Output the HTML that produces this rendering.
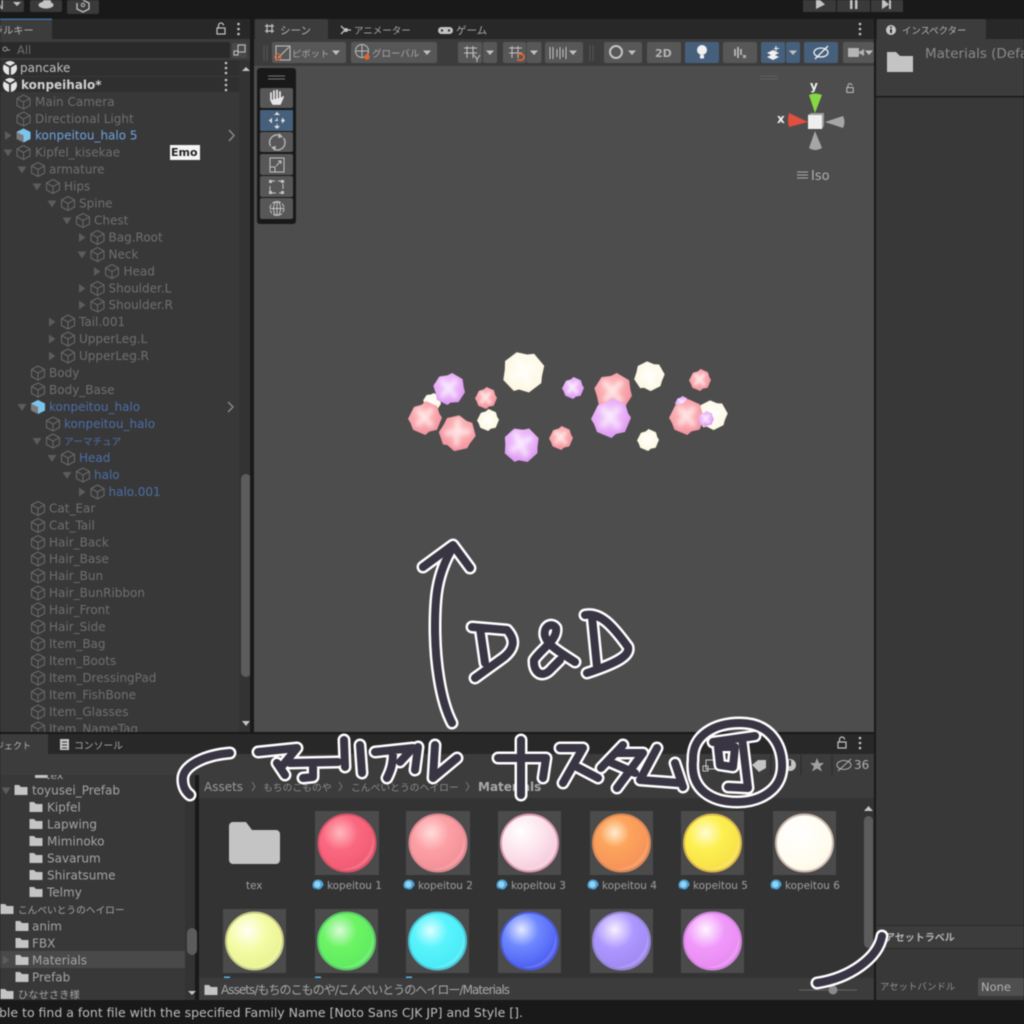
<!DOCTYPE html>
<html><head><meta charset="utf-8"><style>
html,body{margin:0;padding:0;background:#191919;width:1024px;height:1024px;overflow:hidden}
svg{display:block;filter:blur(.5px)}
text{font-family:"DejaVu Sans","Noto Sans CJK JP",sans-serif;font-size:12px;fill:#6f6f6f}
.b{fill:#4b6ea6}.u{fill:#bdbdbd}.k{fill:#a8a8a8;font-size:10.5px}.p{fill:#a5a5a5}.l{fill:#a0a0a0;font-size:10.4px}
.cu{color:#676767}.cb{color:#6a6a6a}
.hw{fill:none;stroke:#fff;stroke-width:13;stroke-linecap:round;stroke-linejoin:round}
.hd{fill:none;stroke:#3a3543;stroke-width:8;stroke-linecap:round;stroke-linejoin:round}
</style></head><body>
<svg width="1024" height="1024" viewBox="0 0 1024 1024" xmlns="http://www.w3.org/2000/svg">
<defs>
<path id="c" d="M0-7 6.500-3.500V3.500L0 7-6.500 3.500V-3.500ZM-6.500-3.500 0 0 6.500-3.500M0 0V7" fill="none" stroke="currentColor" stroke-width="1.100"/>
<path id="ar" d="M-3-4.500 3.500 0-3 4.500Z" fill="#5c5c5c"/>
<path id="ad" d="M-4.500-3H4.500L0 4Z" fill="#5c5c5c"/>
<path id="dd" d="M-4-2H4L0 2.500Z" fill="#c0c0c0"/>
<path id="f" d="M-6.500-5H-2L0-3H6.500V5H-6.500Z" fill="#c4c4c4"/>
<g id="un"><circle r="7" fill="#e4e4e4"/><path d="M0-1 0 7M0-1-6-4.500M0-1 6-4.500" stroke="#333" stroke-width="1.800"/></g>
<g id="pf"><path d="M0-7 7-3.500V3.500L0 7-7 3.500V-3.500Z" fill="#7a7a7a"/><path d="M0-7 7-3.500V3.500L0 7V0L-7-3.500Z" fill="#7cc4ec"/></g>
<g id="dots"><circle cy="-5" r="1.300" fill="#c4c4c4"/><circle r="1.300" fill="#c4c4c4"/><circle cy="5" r="1.300" fill="#c4c4c4"/></g>
<g id="lk"><rect x="-4" y="-1" width="8" height="6" fill="none" stroke="#c4c4c4" stroke-width="1.200"/><path d="M-2.500-1V-3.500A2.500 2.500 0 0 1 2.500-3.500" fill="none" stroke="#c4c4c4" stroke-width="1.200"/></g>
<filter id="sb" x="-50%" y="-50%" width="200%" height="200%"><feGaussianBlur stdDeviation=".13"/></filter>
<radialGradient id="gp" cx=".45" cy=".4" r=".65"><stop offset="0" stop-color="#ffc4c4"/><stop offset=".6" stop-color="#f8a4aa"/><stop offset="1" stop-color="#f08c9e"/></radialGradient>
<radialGradient id="gv" cx=".45" cy=".4" r=".65"><stop offset="0" stop-color="#f2ccff"/><stop offset=".6" stop-color="#e8aef6"/><stop offset="1" stop-color="#d68ff0"/></radialGradient>
<radialGradient id="gc" cx=".5" cy=".45" r=".65"><stop offset="0" stop-color="#fffef4"/><stop offset=".75" stop-color="#fdf8e4"/><stop offset="1" stop-color="#eadcb4"/></radialGradient>
<g id="g1"><polygon points="-.98,-.2 -.6,-.78 -.1,-.85 .2,-1 .85,-.62 .92,-.1 1,.2 .6,.82 .1,.85 -.1,1 -.75,.68 -.85,.2"/><path d="M-.45-.5 .4.45M.4-.5-.4.4" stroke="#fff" stroke-width=".3" stroke-linecap="round" fill="none" opacity=".6" filter="url(#sb)"/></g>
<g id="g2"><polygon points="-1,.05 -.65,-.65 -.2,-.78 .05,-1 .72,-.7 .85,-.25 1,-.02 .7,.7 .25,.8 .02,1 -.7,.7 -.85,.3"/><path d="M-.4-.45 .35.4M.35-.45-.4.35" stroke="#fff" stroke-width=".3" stroke-linecap="round" fill="none" opacity=".6" filter="url(#sb)"/></g>
<radialGradient id="s1" cx=".38" cy=".32" r=".75"><stop offset="0" stop-color="#ffb8bc"/><stop offset=".42" stop-color="#fa6880"/><stop offset="1" stop-color="#ee5870"/></radialGradient>
<radialGradient id="s2" cx=".38" cy=".32" r=".75"><stop offset="0" stop-color="#ffdcdc"/><stop offset=".42" stop-color="#fca0a4"/><stop offset="1" stop-color="#f08c94"/></radialGradient>
<radialGradient id="s3" cx=".35" cy=".3" r=".8"><stop offset="0" stop-color="#fff"/><stop offset=".45" stop-color="#fde6ee"/><stop offset="1" stop-color="#f4c4d8"/></radialGradient>
<radialGradient id="s4" cx=".38" cy=".32" r=".75"><stop offset="0" stop-color="#ffeccc"/><stop offset=".35" stop-color="#fca45c"/><stop offset="1" stop-color="#f68e58"/></radialGradient>
<radialGradient id="s5" cx=".38" cy=".32" r=".75"><stop offset="0" stop-color="#fffcd0"/><stop offset=".4" stop-color="#fdf050"/><stop offset="1" stop-color="#f6dc48"/></radialGradient>
<radialGradient id="s6" cx=".38" cy=".32" r=".8"><stop offset="0" stop-color="#fff"/><stop offset=".75" stop-color="#fffcee"/><stop offset="1" stop-color="#f4eede"/></radialGradient>
<radialGradient id="s7" cx=".38" cy=".32" r=".75"><stop offset="0" stop-color="#fffff4"/><stop offset=".45" stop-color="#f4fca4"/><stop offset="1" stop-color="#e8f090"/></radialGradient>
<radialGradient id="s8" cx=".38" cy=".32" r=".75"><stop offset="0" stop-color="#d8fad8"/><stop offset=".4" stop-color="#6cf464"/><stop offset="1" stop-color="#5ce860"/></radialGradient>
<radialGradient id="s9" cx=".38" cy=".32" r=".75"><stop offset="0" stop-color="#dcffff"/><stop offset=".4" stop-color="#58f4fc"/><stop offset="1" stop-color="#46e8f4"/></radialGradient>
<radialGradient id="s10" cx=".36" cy=".3" r=".75"><stop offset="0" stop-color="#e4eaff"/><stop offset=".4" stop-color="#6e88ff"/><stop offset="1" stop-color="#4858f0"/></radialGradient>
<radialGradient id="s11" cx=".38" cy=".3" r=".75"><stop offset="0" stop-color="#f8f0ff"/><stop offset=".45" stop-color="#ac98ff"/><stop offset="1" stop-color="#a086f0"/></radialGradient>
<radialGradient id="s12" cx=".38" cy=".3" r=".75"><stop offset="0" stop-color="#fff4ff"/><stop offset=".45" stop-color="#f098fa"/><stop offset="1" stop-color="#e888f0"/></radialGradient>
<path id="cr" d="M-8 26A27.500 27.500 0 0 0 26-8 A32 32 0 0 1-8 26Z" fill="#fff" opacity=".14"/>
<g id="mi"><circle r="5.500" fill="#4f9fd0"/><circle cx="-.6" cy="-.6" r="3.200" fill="#8fd4f4"/><path d="M-3.500 3.500A5 5 0 0 0 5 1" stroke="#24323e" stroke-width="1" fill="none"/></g>
</defs>

<rect width="1024" height="1024" fill="#191919"/>
<!-- top toolbar -->
<rect x="0" y="0" width="24" height="12" rx="2" fill="#3a3a3a"/><path d="M13 2H21L17 6Z" fill="#c4c4c4"/><text x="-5" y="9" style="fill:#c4c4c4">N</text>
<rect x="30" y="0" width="32" height="12" rx="2" fill="#3a3a3a"/><ellipse cx="46" cy="5" rx="7.500" ry="3.600" fill="#c4c4c4"/><circle cx="47" cy="2" r="4" fill="#c4c4c4"/>
<rect x="67" y="0" width="32" height="14" rx="2" fill="#3a3a3a"/><path d="M83 0 89 3V9L83 12 77 9V3" fill="none" stroke="#c4c4c4" stroke-width="1.300"/><circle cx="83" cy="5" r="1.700" fill="none" stroke="#c4c4c4"/>
<rect x="803" y="0" width="33" height="12" fill="#3a3a3a"/><rect x="837" y="0" width="33" height="12" fill="#3a3a3a"/><rect x="871" y="0" width="32" height="12" fill="#3a3a3a"/>
<path d="M816 0V9L825 4.500 820 0Z" fill="#c4c4c4"/><rect x="850" y="0" width="2.500" height="9" fill="#c4c4c4"/><rect x="855" y="0" width="2.500" height="9" fill="#c4c4c4"/><path d="M882 0V9L889 4.500 884 0Z" fill="#c4c4c4"/><rect x="889" y="0" width="2" height="9" fill="#c4c4c4"/>

<!-- hierarchy -->
<rect x="0" y="19" width="250" height="20" fill="#282828"/>
<rect x="0" y="19" width="52" height="20" fill="#3c3c3c"/><rect x="0" y="18.500" width="52" height="1.500" fill="#3d6d9c"/>
<text x="-7" y="34" style="font-size:10.200px;fill:#b4b4b4">ラルキー</text>
<use href="#lk" x="221" y="29"/><use href="#dots" x="238.500" y="29"/>
<rect x="0" y="39" width="250" height="21" fill="#3c3c3c"/>
<rect x="0" y="42" width="230" height="16" rx="2" fill="#2a2a2a"/>
<circle cx="5" cy="49" r="2" fill="none" stroke="#999" stroke-width="1"/><path d="M7 50 10 50" stroke="#999"/>
<text x="17" y="54" style="fill:#6e6e6e;font-size:11.500px">All</text>
<rect x="232" y="43" width="15" height="15" rx="2" fill="#4a4a4a"/><rect x="238" y="45" width="7" height="7" fill="none" stroke="#c4c4c4"/><rect x="234" y="51" width="4" height="4" fill="none" stroke="#c4c4c4"/>
<rect x="0" y="60" width="250" height="672" fill="#383838"/>
<rect x="0" y="60" width="239" height="16" fill="#2f2f2f"/><rect x="0" y="76" width="239" height="1" fill="#383838"/><rect x="0" y="77" width="239" height="15" fill="#2f2f2f"/>
<rect x="239" y="60" width="12" height="672" fill="#333"/>
<rect x="241" y="474" width="10" height="203" rx="5" fill="#5c5c5c"/>
<path d="M242 71H250L246 67Z" fill="#c4c4c4"/><path d="M242 721H250L246 726Z" fill="#c4c4c4"/>
<use href="#un" x="10" y="68"/><text x="20" y="72" style="fill:#c0c0c0">pancake</text><use href="#dots" x="226" y="68"/>
<use href="#un" x="10" y="85"/><text x="21" y="89" style="fill:#d0d0d0;font-weight:bold">konpeihalo*</text><use href="#dots" x="226" y="85"/>

<g class="cu">
<use href="#c" x="23.500" y="102"/><use href="#c" x="23.500" y="119"/><use href="#c" x="23.500" y="152.500"/>
<use href="#c" x="38" y="169.500"/><use href="#c" x="53" y="186.500"/><use href="#c" x="68" y="203.500"/><use href="#c" x="83" y="220.500"/>
<use href="#c" x="97.500" y="237.500"/><use href="#c" x="97.500" y="254.500"/><use href="#c" x="112" y="271.500"/><use href="#c" x="97.500" y="288.500"/><use href="#c" x="97.500" y="305"/>
<use href="#c" x="68" y="322"/><use href="#c" x="68" y="339"/><use href="#c" x="68" y="356"/>
<use href="#c" x="38" y="373"/><use href="#c" x="38" y="390"/>
<use href="#c" x="38" y="508.500"/><use href="#c" x="38" y="525.500"/><use href="#c" x="38" y="542.500"/><use href="#c" x="38" y="559"/><use href="#c" x="38" y="576"/><use href="#c" x="38" y="593"/><use href="#c" x="38" y="610"/><use href="#c" x="38" y="627"/><use href="#c" x="38" y="644"/><use href="#c" x="38" y="661"/><use href="#c" x="38" y="678"/><use href="#c" x="38" y="695"/><use href="#c" x="38" y="712"/><use href="#c" x="38" y="729"/>
<use href="#c" x="53" y="424"/><use href="#c" x="53" y="441"/><use href="#c" x="68" y="458"/><use href="#c" x="83" y="475"/><use href="#c" x="97.500" y="492"/>
</g>
<use href="#ar" x="8" y="135.500"/><use href="#ad" x="8" y="152.500"/><use href="#ad" x="22" y="169.500"/><use href="#ad" x="37" y="186.500"/><use href="#ad" x="52" y="203.500"/><use href="#ad" x="67" y="220.500"/><use href="#ar" x="82" y="237.500"/><use href="#ad" x="82" y="254.500"/><use href="#ar" x="97" y="271.500"/><use href="#ar" x="82" y="288.500"/><use href="#ar" x="82" y="305"/><use href="#ar" x="52" y="322"/><use href="#ar" x="52" y="339"/><use href="#ar" x="52" y="356"/>
<use href="#ad" x="22" y="407"/><use href="#ad" x="37" y="441"/><use href="#ad" x="52" y="458"/><use href="#ad" x="67" y="475"/><use href="#ar" x="82" y="492"/>
<use href="#pf" x="23.500" y="135.500"/><use href="#pf" x="38" y="407"/>
<path d="M229 130 234 135.500 229 141M228 402 233 407 228 412" fill="none" stroke="#8a8a8a" stroke-width="1.400"/>

<text x="35" y="106">Main Camera</text>
<text x="35" y="123">Directional Light</text>
<text x="35" y="139.500" style="fill:#6ea3e0">konpeitou_halo 5</text>
<text x="35" y="156.500">Kipfel_kisekae</text>
<rect x="170" y="145" width="30" height="15" fill="#f4f4f4"/><text x="171" y="156" style="fill:#222;font-size:11px;font-weight:bold">Emo</text>
<text x="49" y="173.500">armature</text>
<text x="64" y="190.500">Hips</text>
<text x="79" y="207.500">Spine</text>
<text x="94" y="224.500">Chest</text>
<text x="108.500" y="241.500">Bag.Root</text>
<text x="108.500" y="258.500">Neck</text>
<text x="123.500" y="275.500">Head</text>
<text x="108.500" y="292.500">Shoulder.L</text>
<text x="108.500" y="309">Shoulder.R</text>
<text x="79" y="326">Tail.001</text>
<text x="79" y="343">UpperLeg.L</text>
<text x="79" y="360">UpperLeg.R</text>
<text x="49" y="377">Body</text>
<text x="49" y="394">Body_Base</text>
<text x="49" y="411" class="b">konpeitou_halo</text>
<text x="64" y="428" class="b">konpeitou_halo</text>
<text x="64" y="445" class="b" style="font-size:9.700px">アーマチュア</text>
<text x="79" y="462" class="b">Head</text>
<text x="94" y="479" class="b">halo</text>
<text x="108.500" y="496" class="b">halo.001</text>
<text x="49" y="512.500">Cat_Ear</text>
<text x="49" y="529.500">Cat_Tail</text>
<text x="49" y="546.500">Hair_Back</text>
<text x="49" y="563">Hair_Base</text>
<text x="49" y="580">Hair_Bun</text>
<text x="49" y="597">Hair_BunRibbon</text>
<text x="49" y="614">Hair_Front</text>
<text x="49" y="631">Hair_Side</text>
<text x="49" y="648">Item_Bag</text>
<text x="49" y="665">Item_Boots</text>
<text x="49" y="682">Item_DressingPad</text>
<text x="49" y="699">Item_FishBone</text>
<text x="49" y="716">Item_Glasses</text>
<text x="49" y="733">Item_NameTag</text>
<rect x="0" y="732" width="1024" height="2" fill="#191919"/>
<rect x="250" y="19" width="4" height="715" fill="#191919"/>

<!-- scene -->
<rect x="254" y="19" width="620" height="20" fill="#282828"/>
<rect x="255" y="19" width="73" height="20" rx="2" fill="#3c3c3c"/>
<path d="M265 26H274M265 31H274M267 24V33M272 24V33" stroke="#c4c4c4" stroke-width="1.200"/>
<text x="280" y="34" style="font-size:10.500px;fill:#b4b4b4">シーン</text>
<path d="M341 26 345 30 341 34M345 30H351" fill="none" stroke="#c4c4c4" stroke-width="1.300"/><circle cx="346" cy="30" r="2" fill="#c4c4c4"/>
<text x="354" y="34" style="font-size:9.500px;fill:#a8a8a8">アニメーター</text>
<rect x="438" y="27" width="15" height="7" rx="3.500" fill="#c4c4c4"/><circle cx="442" cy="30.500" r="1.200" fill="#333"/><circle cx="449" cy="30.500" r="1.200" fill="#333"/>
<text x="456" y="34" style="font-size:10.500px;fill:#a8a8a8">ゲーム</text>
<use href="#dots" x="860" y="29"/>
<rect x="254" y="39" width="620" height="27" fill="#3c3c3c"/>
<path d="M264 45V61M267 45V61" stroke="#555"/>
<g fill="#575757">
<rect x="272" y="42" width="74" height="21" rx="2"/><rect x="351" y="42" width="86" height="21" rx="2"/>
<rect x="458" y="42" width="24" height="21" rx="2"/><rect x="483" y="42" width="14" height="21" rx="2"/>
<rect x="503" y="42" width="23" height="21" rx="2"/><rect x="526.500" y="42" width="15" height="21" rx="2"/>
<rect x="545" y="42" width="38" height="21" rx="2"/><rect x="604" y="42" width="38" height="21" rx="2"/>
<rect x="647" y="42" width="34" height="21" rx="2"/><rect x="723" y="42" width="34" height="21" rx="2"/>
<rect x="843" y="42" width="31" height="21" rx="2"/>
</g>
<g fill="#46607c"><rect x="685" y="42" width="34" height="21" rx="2"/><rect x="761" y="42" width="24" height="21" rx="2"/><rect x="786" y="42" width="14" height="21" rx="2"/><rect x="804" y="42" width="34" height="21" rx="2"/></g>
<path d="M590 45V61M593 45V61" stroke="#555"/>
<rect x="276" y="46" width="14" height="14" fill="none" stroke="#c4c4c4"/><path d="M278 58 289 47" stroke="#c4c4c4"/><circle cx="278" cy="57" r="3" fill="none" stroke="#e0652e" stroke-width="1.300"/>
<text x="292" y="57" style="font-size:9.300px;fill:#a8a8a8">ピボット</text><use href="#dd" x="336" y="52.500"/>
<circle cx="362" cy="51" r="6.500" fill="none" stroke="#bbb"/><path d="M356 51H368M362 45V57" stroke="#bbb"/><circle cx="367" cy="57" r="2.800" fill="#e0652e"/>
<text x="372" y="57" style="font-size:9.500px;fill:#a8a8a8">グローバル</text><use href="#dd" x="427" y="52.500"/>
<path d="M464 48H477M464 53H477M467 46V58M473 46V58" stroke="#c4c4c4"/><path d="M474 55 477 59 480 55M477 59V62" stroke="#c4c4c4" fill="none"/><use href="#dd" x="490" y="52.500"/>
<path d="M509 48H522M509 53H522M512 46V58M518 46V58" stroke="#c4c4c4"/><path d="M517 60H521A3 3 0 0 0 521 54H517" fill="none" stroke="#e0652e" stroke-width="1.800"/><use href="#dd" x="534" y="52.500"/>
<path d="M550 47V59M553 47V59M557 49V57M560 47V59M563 49V57M566 47V59" stroke="#c4c4c4"/><use href="#dd" x="573" y="52.500"/>
<circle cx="616" cy="52" r="6" fill="none" stroke="#c4c4c4" stroke-width="2"/><use href="#dd" x="632" y="52.500"/>
<text x="655" y="57" style="font-size:11px;font-weight:bold;fill:#b4b4b4">2D</text>
<circle cx="702" cy="50" r="5" fill="#f0f0f0"/><rect x="700" y="55" width="4" height="3.500" fill="#f0f0f0"/>
<path d="M735 49V56M738 47V58M741 49V55" stroke="#c4c4c4" stroke-width="1.600"/><path d="M743 55 746 58M746 55 743 58" stroke="#c4c4c4"/>
<path d="M767 53 773 50 779 53 773 56ZM767 57 773 54 779 57 773 60Z" fill="#f0f0f0"/><path d="M776 46V51M774 48.500H779" stroke="#f0f0f0"/><use href="#dd" x="793" y="52.500"/>
<ellipse cx="821" cy="52.500" rx="7" ry="4.500" fill="none" stroke="#f0f0f0" stroke-width="1.300"/><path d="M815 59 828 46" stroke="#f0f0f0" stroke-width="1.300"/>
<rect x="848" y="48" width="11" height="9" rx="1" fill="#b4b4b4"/><path d="M859 52 864 49V56L859 53Z" fill="#b4b4b4"/><use href="#dd" x="869" y="52.500"/>

<rect x="254" y="66" width="620" height="666" fill="#4d4d4d"/>
<rect x="874" y="19" width="2" height="981" fill="#191919"/>

<!-- tool palette -->
<rect x="257" y="68" width="39" height="156" rx="3" fill="#191919"/>
<path d="M268 76H285M268 79H285" stroke="#777"/>
<g fill="#575757"><rect x="260" y="88" width="33" height="20" rx="2"/><rect x="260" y="132" width="33" height="20" rx="2"/><rect x="260" y="154" width="33" height="21" rx="2"/><rect x="260" y="176" width="33" height="21" rx="2"/><rect x="260" y="198" width="33" height="21" rx="2"/></g>
<rect x="260" y="110" width="33" height="21" rx="1" fill="#46607c"/>
<path d="M271 100V93M274 99V91M277 99V90.500M280 100V92M283 97 280 104H273L271 100" fill="#e6e6e6" stroke="#e6e6e6" stroke-width="1.800" stroke-linejoin="round" stroke-linecap="round"/>
<path d="M277 112V129M269 120.500H285" stroke="#e0e0e0" stroke-width="1" stroke-dasharray="3 3"/><path d="M277 112 274 115H280ZM277 129 274 126H280ZM269 120.500 272 117.500V123.500ZM285 120.500 282 117.500V123.500Z" fill="#e0e0e0"/>
<path d="M270.500 146A7.500 7.500 0 0 1 281 136M283.500 138A7.500 7.500 0 0 1 273 148.500" fill="none" stroke="#bbb" stroke-width="1.300"/><path d="M279 133 283 137 278 138ZM275 151 271 147 276 146Z" fill="#bbb"/>
<rect x="270" y="158" width="14" height="14" fill="none" stroke="#c4c4c4"/><rect x="270" y="167" width="5" height="5" fill="none" stroke="#c4c4c4"/><path d="M276 166 281 161M278 161H281V164" fill="none" stroke="#c4c4c4"/>
<rect x="270" y="181" width="13" height="12" fill="none" stroke="#c4c4c4" stroke-dasharray="5 3"/><g fill="#c4c4c4"><rect x="269" y="180" width="3" height="3"/><rect x="281" y="180" width="3" height="3"/><rect x="269" y="191" width="3" height="3"/><rect x="281" y="191" width="3" height="3"/></g>
<circle cx="277" cy="208.500" r="7" fill="none" stroke="#c4c4c4" stroke-dasharray="4 1.500"/><path d="M270 208.500H284M277 201.500V215.500" stroke="#c4c4c4"/><ellipse cx="277" cy="208.500" rx="3.500" ry="7" fill="none" stroke="#c4c4c4"/>

<!-- gizmo -->
<path d="M760 76H778M760 79H778" stroke="#5f5f5f"/>
<text x="810" y="90" style="fill:#f0f0f0;font-size:12px;font-weight:bold">y</text>
<text x="777" y="123" style="fill:#f0f0f0;font-size:12px;font-weight:bold">x</text>
<use href="#lk" x="850" y="88" transform="translate(170 18) scale(.8)"/>
<path d="M815 113 809 95Q815 92 822 95Z" fill="#86d844"/>
<path d="M808 122 789 127Q787 120 789 113Z" fill="#e04f40"/>
<path d="M825 122 843 116Q846 122 843 128Z" fill="#a6a6a6"/>
<path d="M815 131 809 148Q815 152 822 148Z" fill="#a6a6a6"/>
<rect x="808" y="115" width="14" height="14" fill="#eeeeee"/><path d="M808 115 811 113H824V126L822 129V115Z" fill="#9a9a9a"/>
<path d="M797 172H808M797 175H808M797 178H808" stroke="#aaa"/>
<text x="811" y="180" style="font-size:13px;fill:#b0b0b0">Iso</text>

<!-- konpeito -->
<g fill="url(#gc)"><use href="#g1" transform="translate(432 402) scale(9)"/></g>
<g fill="url(#gp)"><use href="#g2" transform="translate(425 418) scale(17)"/></g>
<g fill="url(#gv)"><use href="#g1" transform="translate(449 389) scale(16)"/></g>
<g fill="url(#gp)"><use href="#g1" transform="translate(457 433) rotate(45) scale(18)"/><use href="#g2" transform="translate(486 398) scale(11)"/></g>
<g fill="url(#gc)"><use href="#g2" transform="translate(488 420) scale(11)"/><use href="#g1" transform="translate(523 372) rotate(20) scale(21)"/></g>
<g fill="url(#gv)"><use href="#g1" transform="translate(521 445) rotate(15) scale(18)"/><use href="#g2" transform="translate(573 388) scale(11)"/></g>
<g fill="url(#gp)"><use href="#g2" transform="translate(561 438) scale(12)"/><use href="#g1" transform="translate(613 392) scale(19)"/></g>
<g fill="url(#gv)"><use href="#g2" transform="translate(611 418) scale(20)"/></g>
<g fill="url(#gc)"><use href="#g1" transform="translate(649 376) rotate(30) scale(15)"/><use href="#g2" transform="translate(648 440) scale(11)"/></g>
<g fill="url(#gp)"><use href="#g2" transform="translate(700 380) scale(11)"/></g>
<g fill="url(#gv)"><use href="#g2" transform="translate(682 403) scale(7)"/></g>
<g fill="url(#gc)"><use href="#g1" transform="translate(712 415) rotate(30) scale(15)"/></g>
<g fill="url(#gp)"><use href="#g2" transform="translate(687 417) scale(18)"/></g>
<g fill="url(#gv)"><use href="#g2" transform="translate(706 419) scale(8)"/></g>

<!-- inspector -->
<rect x="876" y="19" width="148" height="20" fill="#282828"/>
<rect x="877" y="19" width="109" height="20" rx="2" fill="#3c3c3c"/>
<circle cx="891" cy="30" r="5" fill="#c8c8c8"/><rect x="890" y="29" width="2" height="4" fill="#333"/><rect x="890" y="26.500" width="2" height="1.500" fill="#333"/>
<text x="902" y="34" style="font-size:9.400px;fill:#b4b4b4">インスペクター</text>
<rect x="876" y="39" width="148" height="57" fill="#3c3c3c"/>
<rect x="876" y="96" width="148" height="1.500" fill="#191919"/>
<rect x="876" y="97.500" width="148" height="903" fill="#383838"/>
<use href="#f" transform="translate(900 62) scale(2)"/>
<text x="925" y="58" style="font-size:13.500px;fill:#8a8a8a">Materials (Defa</text>
<rect x="876" y="925" width="148" height="1" fill="#2a2a2a"/><rect x="876" y="926" width="148" height="22" fill="#3c3c3c"/><rect x="876" y="948" width="148" height="1" fill="#2a2a2a"/>
<text x="885" y="941" style="font-size:10px;font-weight:bold;fill:#b4b4b4">アセットラベル</text>
<text x="880" y="990" style="font-size:9.400px;fill:#8f8f8f">アセットバンドル</text>
<rect x="978" y="978" width="50" height="18" rx="2" fill="#4f4f4f"/><text x="981" y="991" style="font-size:11.500px;fill:#b4b4b4">None</text>

<!-- project -->
<rect x="0" y="775" width="185" height="225" fill="#383838"/><rect x="185" y="775" width="10" height="225" fill="#333"/><rect x="195" y="775" width="4" height="225" fill="#191919"/>
<text x="46" y="779" class="p" style="font-size:11px">tex</text>
<rect x="35" y="772" width="12" height="6" fill="#c4c4c4"/>
<rect x="0" y="734" width="874" height="20" fill="#282828"/>
<rect x="0" y="734" width="48" height="20" fill="#3c3c3c"/>
<text x="-5" y="749" style="font-size:9px;fill:#b4b4b4">ジェクト</text>
<rect x="60" y="739" width="9" height="11" fill="#c4c4c4"/><path d="M62 742H67M62 745H67M62 748H67" stroke="#333"/>
<text x="74" y="749" style="font-size:9.800px;fill:#a8a8a8">コンソール</text>
<use href="#lk" x="842" y="743"/><use href="#dots" x="860" y="743"/>
<rect x="0" y="754" width="874" height="21" fill="#3c3c3c"/>
<rect x="187" y="928" width="10" height="27" rx="5" fill="#5c5c5c"/><path d="M188 991H196L192 995Z" fill="#c4c4c4"/>
<rect x="0" y="951" width="185" height="17" fill="#494949"/>
<use href="#ad" x="6" y="790.500"/><use href="#ar" x="6" y="960"/>
<g><use href="#f" x="21" y="790"/><use href="#f" x="36" y="807"/><use href="#f" x="36" y="824"/><use href="#f" x="36" y="841"/><use href="#f" x="36" y="858"/><use href="#f" x="36" y="875"/><use href="#f" x="36" y="892"/><use href="#f" x="7" y="909"/><use href="#f" x="22" y="926"/><use href="#f" x="22" y="943"/><use href="#f" x="22" y="960"/><use href="#f" x="22" y="977"/><use href="#f" x="7" y="994"/></g>
<text x="32" y="794.500" class="p">toyusei_Prefab</text>
<text x="47" y="811.500" class="p">Kipfel</text>
<text x="47" y="828.500" class="p">Lapwing</text>
<text x="47" y="845.500" class="p">Miminoko</text>
<text x="47" y="862.500" class="p">Savarum</text>
<text x="47" y="879.500" class="p">Shiratsume</text>
<text x="47" y="896.500" class="p">Telmy</text>
<text x="18" y="913.500" class="p" style="font-size:9.700px">こんぺいとうのヘイロー</text>
<text x="32" y="930.500" class="p">anim</text>
<text x="32" y="947.500" class="p">FBX</text>
<text x="32" y="964.500" class="p">Materials</text>
<text x="32" y="981.500" class="p">Prefab</text>
<text x="18" y="998.500" class="p" style="font-size:10.300px">ひなせさき様</text>

<rect x="199" y="775" width="675" height="23" fill="#3c3c3c"/>
<rect x="199" y="798" width="675" height="180" fill="#333333"/>
<text x="204" y="791" style="font-size:12px;fill:#9a9a9a">Assets</text>
<text x="263" y="791" style="font-size:9.800px;fill:#8a8a8a">もちのこものや</text>
<text x="351" y="791" style="font-size:9.800px;fill:#8a8a8a">こんぺいとうのヘイロー</text>
<text x="478" y="791" style="font-size:12px;font-weight:bold;fill:#a8a8a8">Materials</text>
<path d="M252 782 255 786.500 252 791M339 782 342 786.500 339 791M466 782 469 786.500 466 791" fill="none" stroke="#777"/>
<g stroke="#2a2a2a"><path d="M721 755V775M771 755V775M801 755V775M832 755V775"/></g>
<rect x="706" y="760" width="9" height="9" fill="none" stroke="#c4c4c4"/><rect x="703" y="766" width="5" height="5" fill="none" stroke="#c4c4c4"/>
<circle cx="733" cy="765" r="5" fill="#b0b0b0"/><path d="M758 760H766V768L759 772 752 765Z" fill="#c4c4c4"/><circle cx="790" cy="765" r="6" fill="#c4c4c4"/><rect x="789" y="760" width="2" height="6" fill="#333"/>
<path d="M817 758 819 763 824 763 820 766.500 822 771.500 817 768.500 812 771.500 814 766.500 810 763 815 763Z" fill="#a0a0a0"/>
<ellipse cx="844" cy="765" rx="7" ry="4.500" fill="none" stroke="#b0b0b0"/><path d="M838 771 851 759" stroke="#b0b0b0"/>
<text x="854" y="769" style="font-size:12px;fill:#b0b0b0">36</text>

<!-- material grid -->
<g fill="#4b4b4b"><rect x="315" y="811" width="64" height="64"/><rect x="406" y="811" width="64" height="64"/><rect x="498" y="811" width="63" height="64"/><rect x="590" y="811" width="63" height="64"/><rect x="681" y="811" width="63" height="64"/><rect x="773" y="811" width="63" height="64"/>
<rect x="223" y="909" width="63" height="64"/><rect x="315" y="909" width="63" height="64"/><rect x="406" y="909" width="63" height="64"/><rect x="498" y="909" width="63" height="64"/><rect x="590" y="909" width="63" height="64"/><rect x="681" y="909" width="63" height="64"/></g>
<g stroke-width="2">
<circle cx="347" cy="843" r="28.500" fill="url(#s1)" stroke="#d85468"/><circle cx="438" cy="843" r="28.500" fill="url(#s2)" stroke="#dc8890"/><circle cx="529.500" cy="843" r="28.500" fill="url(#s3)" stroke="#d898ac"/><circle cx="621.500" cy="843" r="28.500" fill="url(#s4)" stroke="#d88858"/><circle cx="712.500" cy="843" r="28.500" fill="url(#s5)" stroke="#d8b44c"/><circle cx="804.500" cy="843" r="28.500" fill="url(#s6)" stroke="#ccb8ac"/>
<circle cx="254.500" cy="941" r="28.500" fill="url(#s7)" stroke="#c4c884"/><circle cx="346.500" cy="941" r="28.500" fill="url(#s8)" stroke="#5cc468"/><circle cx="437.500" cy="941" r="28.500" fill="url(#s9)" stroke="#4cc0d0"/><circle cx="529.500" cy="941" r="28.500" fill="url(#s10)" stroke="#4a5ad0"/><circle cx="621.500" cy="941" r="28.500" fill="url(#s11)" stroke="#9484d0"/><circle cx="712.500" cy="941" r="28.500" fill="url(#s12)" stroke="#d084dc"/>
</g>
<use href="#cr" x="347" y="843"/><use href="#cr" x="438" y="843"/><use href="#cr" x="529.500" y="843"/><use href="#cr" x="621.500" y="843"/><use href="#cr" x="712.500" y="843"/><use href="#cr" x="254.500" y="941"/><use href="#cr" x="346.500" y="941"/><use href="#cr" x="437.500" y="941"/><use href="#cr" x="529.500" y="941"/><use href="#cr" x="621.500" y="941"/><use href="#cr" x="712.500" y="941"/>
<path d="M229 826A4 4 0 0 1 233 822H246L252 830H276A4 4 0 0 1 280 834V860A4 4 0 0 1 276 864H233A4 4 0 0 1 229 860Z" fill="#c4c4c4"/>
<text x="246" y="889" class="l">tex</text>
<use href="#mi" x="318" y="885"/><text x="327" y="889" class="l">kopeitou 1</text>
<use href="#mi" x="409" y="885"/><text x="418" y="889" class="l">kopeitou 2</text>
<use href="#mi" x="502" y="885"/><text x="511" y="889" class="l">kopeitou 3</text>
<use href="#mi" x="593" y="885"/><text x="602" y="889" class="l">kopeitou 4</text>
<use href="#mi" x="684" y="885"/><text x="693" y="889" class="l">kopeitou 5</text>
<use href="#mi" x="776" y="885"/><text x="785" y="889" class="l">kopeitou 6</text>
<rect x="224" y="976.500" width="6" height="2" fill="#5bb4e4"/><rect x="315" y="976.500" width="6" height="2" fill="#5bb4e4"/><rect x="406" y="976.500" width="6" height="2" fill="#5bb4e4"/>
<rect x="864" y="816" width="9" height="132" rx="4.500" fill="#5c5c5c"/><path d="M864 811H873L868.500 806Z" fill="#c4c4c4"/>
<rect x="199" y="978" width="675" height="22" fill="#3c3c3c"/>
<use href="#f" x="211" y="990"/>
<text x="221" y="994" style="font-size:12px;fill:#a8a8a8" textLength="289">Assets/もちのこものや/こんぺいとうのヘイロー/Materials</text>
<path d="M799 990H857" stroke="#666"/><circle cx="833" cy="990" r="4.500" fill="#8a8a8a"/>

<!-- status bar -->
<rect x="0" y="1000" width="1024" height="24" fill="#191919"/>
<text x="-1" y="1017" style="font-size:12.500px;fill:#bcbcbc" textLength="524">ble to find a font file with the specified Family Name [Noto Sans CJK JP] and Style [].</text>

<!-- hand drawn -->
<g class="hw">
<path id="hp" d="M452 723C440 700 435 660 435 627C435 600 436 575 453 547M423 567 453 545 470 568M472 627 507 630C516 640 515 650 500 660L475 678M480 628 485 663M575 662C560 652 548 646 545 636 543 626 552 622 556 628 558 640 540 650 534 660 533 672 542 680 552 668L560 660M585 615C600 612 612 625 628 647 630 655 620 662 587 673M592 617 597 667M230 753C205 755 185 765 183 777 182 786 186 792 190 795M258 752 297 748 283 765M277 763 285 775M290 763 338 762M313 765 313 777 303 778M344 740 345 767M360 745 362 773M375 752 413 748 400 762M393 753C393 765 390 772 387 778M418 747 415 770M435 745 433 778 457 758M498 758 546 758 543 778M521 740 521 795M560 748 583 748 563 783M577 767 598 778M623 745 601 768M617 753 643 753 617 788M612 763 635 773M657 748 640 780 680 783M675 763 683 787M882 936C878 958 850 978 817 983M693 760C692 735 715 723 740 723 770 723 783 745 782 768 781 790 760 802 737 802 712 802 690 790 693 760ZM713 742 755 736M742 738 748 788 728 787M718 747 735 747 733 767 720 765Z"/>
</g>
<g class="hd"><use href="#hp"/></g>
</svg>
</body></html>
